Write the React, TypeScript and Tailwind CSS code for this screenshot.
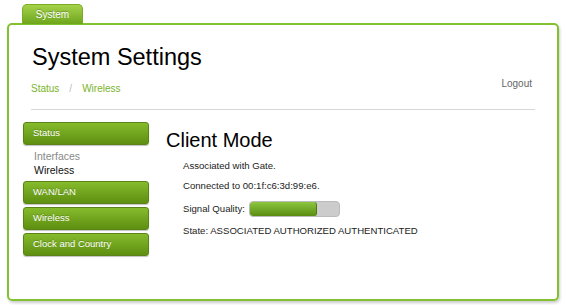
export default function App() {
  return (
    <div className="w-[566px] h-[305px] bg-white overflow-hidden font-['Liberation_Sans',Arial,sans-serif] text-[#111]">
      <div className="pl-[22px] pt-[4px] h-[24px] flex">
        <div className="w-[61px] h-[20px] rounded-t-[5px] border border-b-0 border-[#7aae22] bg-gradient-to-b from-[#a5d24a] to-[#6ea51c] text-white text-[10px] flex items-center justify-center [text-shadow:0_-1px_0_rgba(0,0,0,0.25)]">
          System
        </div>
      </div>
      <div className="mx-[7px] -mt-[1px] h-[278px] border-2 border-[#82c232] rounded-[5px] shadow-[1px_2px_3px_rgba(0,0,0,0.2)] px-[22px]">
        <h1 className="text-[23.5px] leading-none mt-[21px] ml-[1px] text-black">System Settings</h1>
        <div className="flex items-start justify-between mt-[8px]">
          <div className="text-[10px] leading-[12px] text-[#7ab42a] flex gap-[10px] mt-[5px]">
            <span>Status</span>
            <span className="text-[#bbb]">/</span>
            <span>Wireless</span>
          </div>
          <div className="text-[10px] leading-[12px] text-[#666] mr-[3px]">Logout</div>
        </div>
        <div className="mt-[14px] border-t border-[#d8d8d8]"></div>
        <div className="flex mt-[12px] -ml-[8px]">
          <div className="w-[126px] flex flex-col">
            <NavButton label="Status" />
            <div className="pl-[11px] pt-[4px] pb-[4px] text-[10.5px] leading-[14px]">
              <div className="text-[#888]">Interfaces</div>
              <div className="text-[#111]">Wireless</div>
            </div>
            <div className="flex flex-col gap-[3px]">
              <NavButton label="WAN/LAN" />
              <NavButton label="Wireless" />
              <NavButton label="Clock and Country" />
            </div>
          </div>
          <div className="ml-[17px] flex-1">
            <h2 className="text-[20px] leading-none mt-[8px] text-black">Client Mode</h2>
            <div className="pl-[17px] text-[9.6px] text-[#222] mt-[10px] flex flex-col gap-[8px]">
              <div className="leading-[12px]">Associated with Gate.</div>
              <div className="leading-[12px]">Connected to 00:1f:c6:3d:99:e6.</div>
              <div className="flex items-center gap-[4px] leading-[12px] mt-[1px]">
                <span>Signal Quality:</span>
                <div className="w-[91px] h-[16px] rounded-[4px] bg-[#cccccc] border border-[#bbb] overflow-hidden">
                  <div className="h-full w-[76%] rounded-[3px] bg-gradient-to-b from-[#8dc63f] to-[#5a8d0e] border-r border-[#4e7a0c]"></div>
                </div>
              </div>
              <div className="leading-[12px]">State: ASSOCIATED AUTHORIZED AUTHENTICATED</div>
            </div>
          </div>
        </div>
      </div>
    </div>
  )
}

function NavButton({ label }: { label: string }) {
  return (
    <div className="h-[23px] rounded-[3px] border border-[#5b8418] bg-gradient-to-b from-[#86bb2c] to-[#5e8f10] text-white text-[9.5px] pl-[9px] flex items-center shadow-[0_1px_1px_rgba(0,0,0,0.25)] [text-shadow:0_-1px_0_rgba(0,0,0,0.2)]">
      {label}
    </div>
  )
}
